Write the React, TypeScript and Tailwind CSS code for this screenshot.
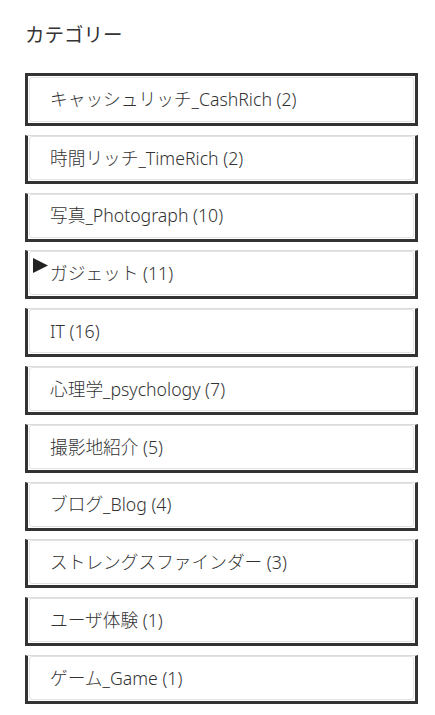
const categories = [
  { name: 'キャッシュリッチ_CashRich', count: 2 },
  { name: '時間リッチ_TimeRich', count: 2 },
  { name: '写真_Photograph', count: 10 },
  { name: 'ガジェット', count: 11, marker: true },
  { name: 'IT', count: 16 },
  { name: '心理学_psychology', count: 7 },
  { name: '撮影地紹介', count: 5 },
  { name: 'ブログ_Blog', count: 4 },
  { name: 'ストレングスファインダー', count: 3 },
  { name: 'ユーザ体験', count: 1 },
  { name: 'ゲーム_Game', count: 1 },
]

export default function App() {
  return (
    <div
      className="min-h-[715px] w-[435px] bg-white pl-[25px] pr-[17px] pt-[21px] text-[#333]"
      style={{ fontFamily: '"Noto Sans", "Noto Sans CJK JP", sans-serif' }}
    >
      <h2 className="text-[19.5px] font-normal leading-[28px]">カテゴリー</h2>

      <ul className="mt-[24px] flex flex-col">
        {categories.map((cat, i) => (
          <li
            key={cat.name}
            className={
              i === 0
                ? 'relative h-[53px] border-[3px] border-[#333] p-px'
                : 'relative mt-[8.8px] h-[49px] border-x-[3px] border-b-[3px] border-t border-[#333] border-t-[#dcdcdc] px-px pb-px'
            }
          >
            <a
              href="#"
              className="flex h-full items-center rounded-[3px] border border-[#e2e2e2] pl-[20px] text-[17.7px] font-light text-[#333]"
            >
              {cat.name} ({cat.count})
            </a>
            {cat.marker && (
              <svg
                className="absolute left-[5px] top-[7px]"
                width="15"
                height="15"
                viewBox="0 0 15 15"
              >
                <path d="M0 0 L15 7.5 L0 15 Z" fill="#222" />
              </svg>
            )}
          </li>
        ))}
      </ul>
    </div>
  )
}
